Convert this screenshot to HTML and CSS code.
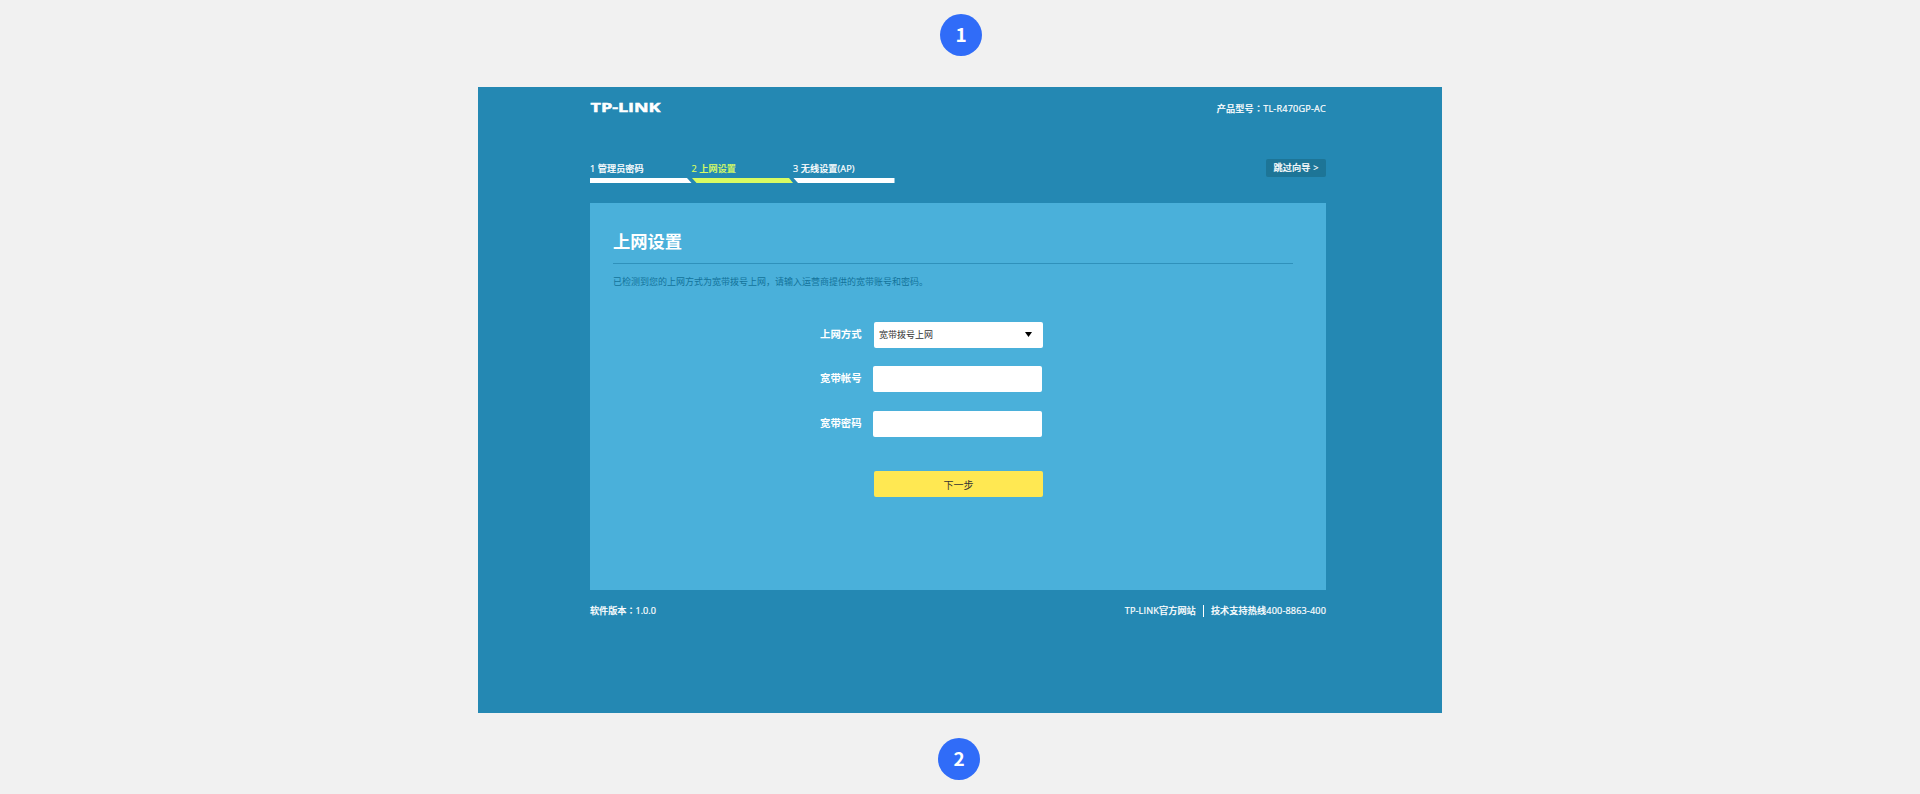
FILE: index.html
```
<!DOCTYPE html>
<html lang="zh-CN">
<head>
<meta charset="utf-8">
<title>TP-LINK 上网设置</title>
<link rel="stylesheet" href="styles.css">
</head>
<body>
<div class="badge badge-first">1</div>
<main class="router">
  <header class="top">
    <svg class="logo" width="72" height="12" viewBox="0 0 72 12" aria-label="TP-LINK"><text x="0.5" y="9.8" textLength="70" lengthAdjust="spacingAndGlyphs">TP-LINK</text></svg>
    <span class="model">产品型号<span class="mark" lang="zh-Hant">：</span>TL-R470GP-AC</span>
  </header>
  <nav class="wizard">
    <ol class="steps">
      <li class="step">1 管理员密码<i class="bar bar-start"></i></li>
      <li class="step active">2 上网设置<i class="bar bar-mid"></i></li>
      <li class="step">3 无线设置(AP)<i class="bar bar-end"></i></li>
    </ol>
    <button class="skip">跳过向导 &gt;</button>
  </nav>
  <section class="panel">
    <h1 class="title">上网设置</h1>
    <p class="hint">已检测到您的上网方式为宽带拨号上网，请输入运营商提供的宽带账号和密码。</p>
    <form class="form">
      <label class="label">上网方式</label>
      <div class="field select"><span>宽带拨号上网</span><svg width="7" height="5" viewBox="0 0 7 5"><path d="M0 0h7L3.5 5z"/></svg></div>
      <label class="label">宽带帐号</label>
      <input class="field input" type="text">
      <label class="label">宽带密码</label>
      <input class="field input" type="password">
      <button class="field next" type="button">下一步</button>
    </form>
  </section>
  <footer class="footer">
    <span class="version">软件版本<span class="mark" lang="zh-Hant">：</span>1.0.0</span>
    <span class="links"><span class="site">TP-LINK官方网站</span><i class="divider"></i><span class="hotline">技术支持热线400-8863-400</span></span>
  </footer>
</main>
<div class="badge badge-second">2</div>
</body>
</html>
```
FILE: styles.css
```
* { box-sizing: border-box; }
body {
  margin: 0;
  height: 794px;
  padding-top: 14px;
  overflow: hidden;
  display: flex;
  flex-direction: column;
  align-items: center;
  background: #f1f1f1;
  font: 9px/14px "Open Sans", "Noto Sans CJK SC", sans-serif;
  color: #fff;
}
.badge {
  flex: none;
  width: 42px;
  height: 42px;
  border-radius: 50%;
  background: #306cf8;
  font: 700 19px/40px "Noto Sans CJK SC", sans-serif;
  text-align: center;
}
.badge-first { margin-left: 2px; }
.badge-second { margin: 25px 2px 0 0; }
.router {
  flex: none;
  width: 964px;
  height: 626px;
  margin-top: 31px;
  padding: 0 116px 0 112px;
  background: #2488b3;
}
.mark { font-family: "Noto Sans CJK TC", sans-serif; }
.top {
  display: flex;
  justify-content: space-between;
  height: 72px;
  padding-top: 14px;
}
.logo { margin-top: 1px; overflow: visible; }
.logo text {
  font: 700 13px "Open Sans", sans-serif;
  fill: #fff;
  stroke: #fff;
  stroke-width: .5px;
}
.model, .version, .links, .steps, .skip {
  font-size: 9.1px;
  font-weight: 500;
  -webkit-text-stroke: .2px currentColor;
}
.model { letter-spacing: .2px; }
.wizard {
  display: flex;
  justify-content: space-between;
  height: 44px;
}
.steps { display: flex; margin: 3px 0 0; padding: 0; list-style: none; }
.step { width: 101.5px; white-space: nowrap; letter-spacing: .1px; }
.active { color: #d9fb62; }
.bar { display: block; height: 5px; margin-top: 2px; background: #fff; }
.active .bar { background: #d9fb62; }
.bar-start { clip-path: polygon(0 0, 97px 0, 101.5px 100%, 0 100%); }
.bar-mid { clip-path: polygon(0.5px 0, 97.5px 0, 101.5px 100%, 5px 100%); }
.bar-end { clip-path: polygon(0.5px 0, 100% 0, 100% 100%, 5px 100%); }
.skip {
  width: 60px;
  height: 18px;
  padding: 0;
  border: 0;
  border-radius: 2px;
  background: #1d7597;
  color: #fff;
  font-family: inherit;
  letter-spacing: .2px;
  line-height: 18px;
}
.panel {
  height: 387px;
  padding: 24px 33px 0 23px;
  background: #4ab0da;
}
.title {
  height: 37px;
  margin: 0;
  border-bottom: 1px solid #2f91bb;
  font: 700 17.3px/27px "Noto Sans CJK SC", sans-serif;
}
.hint { margin: 11px 0 0; color: #13739b; }
.form {
  display: grid;
  grid-template-columns: 42px 169px;
  grid-template-rows: 26px 27px 26px 26px;
  gap: 18px 11px;
  align-items: start;
  margin: 33px 0 0 207px;
}
.label { font-size: 10.4px; font-weight: 700; line-height: 25px; white-space: nowrap; }
.field { width: 169px; height: 26px; border: 0; border-radius: 2px; background: #fff; color: #333; }
.select {
  display: flex;
  align-items: center;
  justify-content: space-between;
  margin-left: 1px;
  padding: 0 11px 1px 5px;
}
.next {
  grid-column: 2;
  margin: 16px 0 0 1px;
  background: #ffe852;
  font: 10px/26px "Noto Sans CJK SC", sans-serif;
}
.footer { display: flex; justify-content: space-between; padding-top: 13px; }
.links { display: flex; align-items: center; letter-spacing: .15px; }
.divider { width: 1px; height: 12px; margin: 0 7px; background: #fff; }
```
